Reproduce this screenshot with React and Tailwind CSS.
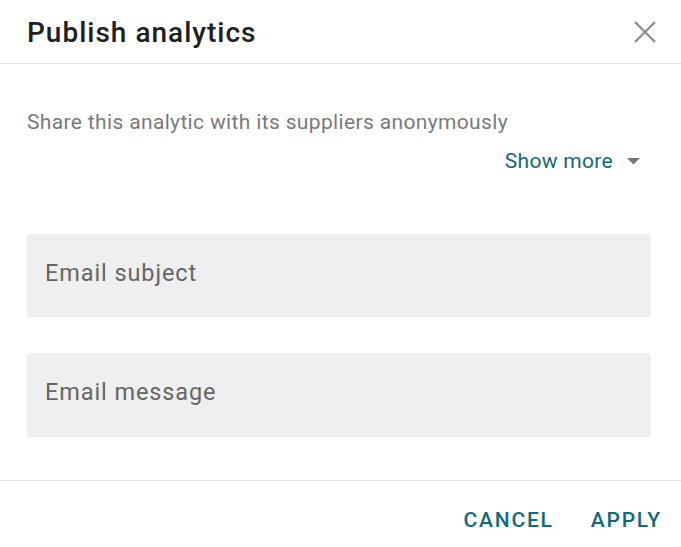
export default function App() {
  return (
    <div className="w-[681px] h-[547px] bg-white flex flex-col" style={{ fontFamily: "Roboto, 'Liberation Sans', sans-serif" }}>
      <div className="h-[64px] shrink-0 flex items-center justify-between pl-[27px] pr-[24px] border-b border-[#dedede]">
        <h1 className="text-[28px] font-medium tracking-[1px] text-[#212121] leading-none pt-[3px]">Publish analytics</h1>
        <svg width="24" height="24" viewBox="0 0 24 24" className="text-[#8f8f8f]">
          <path d="M2 2 L22 22 M22 2 L2 22" stroke="currentColor" strokeWidth="2.4" />
        </svg>
      </div>
      <div className="flex-1 px-[27px] pt-[45px] pr-[30px]">
        <p className="text-[21px] tracking-[0.35px] text-[#7a7a7a] leading-[26px]">Share this analytic with its suppliers anonymously</p>
        <div className="flex justify-end items-center mt-[13px] pr-[11px]">
          <span className="text-[21px] tracking-[0.3px] text-[#0f6b78] leading-[26px]">Show more</span>
          <svg width="13" height="8" viewBox="0 0 13 8" className="ml-[14px] mt-[2px]">
            <path d="M0 0 L13 0 L6.5 6.5 Z" fill="#757575" />
          </svg>
        </div>
        <div className="mt-[60px] flex flex-col gap-[36px]">
          <div className="h-[83px] bg-[#efefef] rounded-t-[4px] flex items-center pl-[18px]">
            <span className="text-[23.5px] tracking-[0.9px] text-[#666] pb-[4px]">Email subject</span>
          </div>
          <div className="h-[84px] bg-[#efefef] rounded-t-[4px] flex items-center pl-[18px]">
            <span className="text-[23.5px] tracking-[0.9px] text-[#666] pb-[4px]">Email message</span>
          </div>
        </div>
      </div>
      <div className="h-[67px] shrink-0 border-t border-[#dedede] flex items-center justify-end pr-[19px] gap-[37px] pt-[12px]">
        <span className="text-[21px] font-medium tracking-[1.8px] text-[#0f6b78] leading-none">CANCEL</span>
        <span className="text-[21px] font-medium tracking-[1.8px] text-[#0f6b78] leading-none">APPLY</span>
      </div>
    </div>
  );
}
